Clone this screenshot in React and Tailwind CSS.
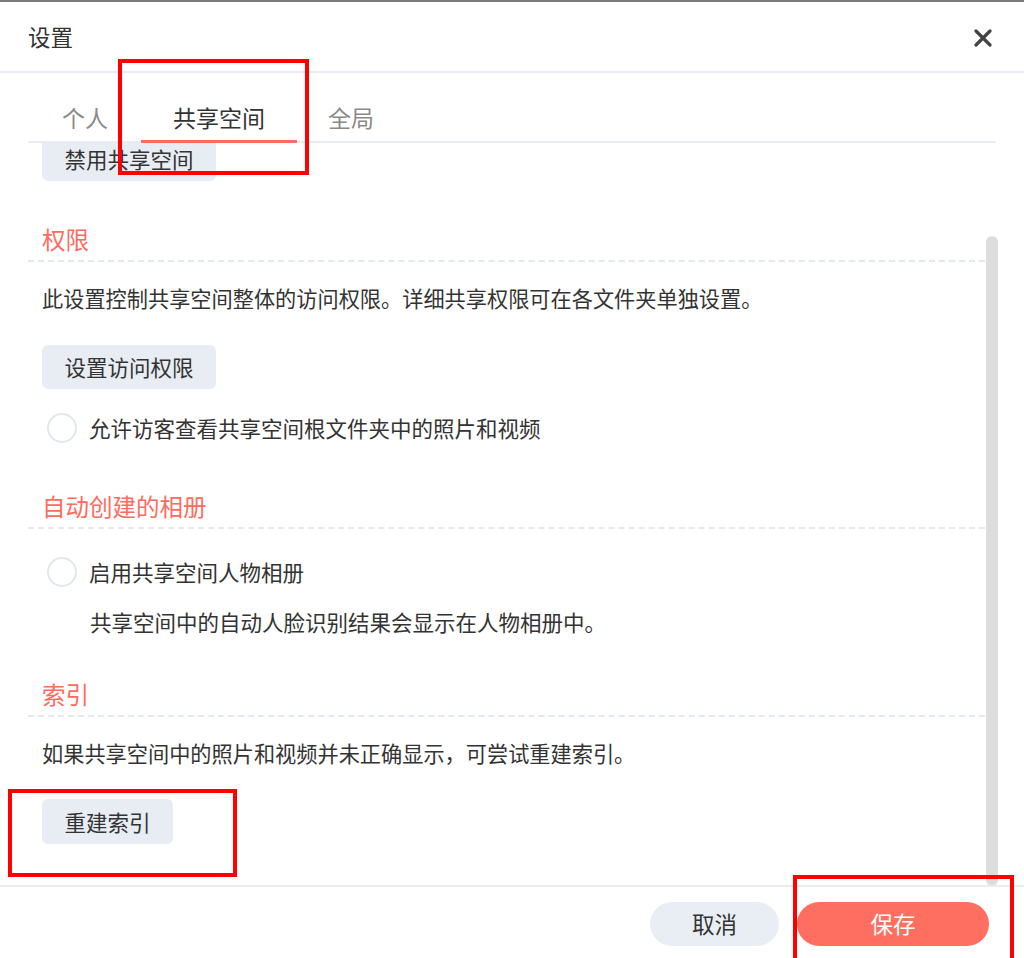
import React from 'react';

const font = { fontFamily: '"Noto Sans CJK SC", "Noto Sans", sans-serif' };

const GrayButton = ({ children, className = '' }) => (
  <button className={`h-[44px] rounded-[6px] bg-[#e8edf3] text-[#333] text-[21.5px] leading-none ${className}`}>
    {children}
  </button>
);

const SectionTitle = ({ children, className = '' }) => (
  <div className={`border-b-2 border-dashed border-[#e3e9f0] pb-[6px] ${className}`}>
    <div className="pl-[14px] h-[30px] leading-[30px] text-[23.5px] text-[#ff6b5e]">{children}</div>
  </div>
);

const Radio = ({ label }) => (
  <div className="flex items-center gap-[12px] pl-[19px] h-[30px]">
    <span className="w-[30px] h-[30px] rounded-full border-2 border-[#e1e7ee] bg-white shrink-0" />
    <span className="text-[21.5px] text-[#333] leading-[30px]">{label}</span>
  </div>
);

export default function App() {
  return (
    <div className="relative w-[1024px] h-[958px] bg-white overflow-hidden border-t-2 border-[#7a7a7a]" style={font}>
      {/* header */}
      <div className="h-[71px] flex items-center justify-between pl-[28px] pr-[32px] border-b-2 border-[#e8edf3]">
        <span className="text-[22.5px] text-[#333]">设置</span>
        <svg width="18" height="18" viewBox="0 0 18 18" className="mt-[2px]">
          <path d="M2 2 L16 16 M16 2 L2 16" stroke="#444" strokeWidth="3.2" strokeLinecap="round" />
        </svg>
      </div>

      {/* tabs */}
      <div className="px-[28px]">
        <div className="h-[70px] flex items-end border-b-2 border-[#e8edf3] pl-[30px]">
          <div className="px-[4px] h-full flex items-center pt-[20px] text-[23px] text-[#8a8a8a]">个人</div>
          <div className="ml-[29px] w-[156px] h-full flex items-center justify-center pt-[20px] text-[23px] text-[#333] border-b-[3px] border-[#ff6b5e] -mb-[2px]">共享空间</div>
          <div className="ml-[31px] h-full flex items-center pt-[20px] text-[23px] text-[#8a8a8a]">全局</div>
        </div>
      </div>

      {/* scrolling body */}
      <div className="h-[742px] flex overflow-hidden">
        <div className="flex-1 pl-[28px] overflow-hidden">
          <div className="-mt-[6px] pl-[14px]">
            <GrayButton className="w-[174px]">禁用共享空间</GrayButton>
          </div>

          <SectionTitle className="mt-[43px]">权限</SectionTitle>
          <div className="pl-[14px] mt-[21px] h-[30px] leading-[30px] text-[21.2px] text-[#333]">此设置控制共享空间整体的访问权限。详细共享权限可在各文件夹单独设置。</div>
          <div className="pl-[14px] mt-[32px]">
            <GrayButton className="w-[174px]">设置访问权限</GrayButton>
          </div>
          <div className="mt-[24px]">
            <Radio label="允许访客查看共享空间根文件夹中的照片和视频" />
          </div>

          <SectionTitle className="mt-[48px]">自动创建的相册</SectionTitle>
          <div className="mt-[28px]">
            <Radio label="启用共享空间人物相册" />
          </div>
          <div className="pl-[62px] mt-[20px] h-[30px] leading-[30px] text-[21.5px] text-[#333]">共享空间中的自动人脸识别结果会显示在人物相册中。</div>

          <SectionTitle className="mt-[42px]">索引</SectionTitle>
          <div className="pl-[14px] mt-[21px] h-[30px] leading-[30px] text-[21.2px] text-[#333]">如果共享空间中的照片和视频并未正确显示，可尝试重建索引。</div>
          <div className="pl-[14px] mt-[31px]">
            <GrayButton className="w-[131px] h-[45px]">重建索引</GrayButton>
          </div>
        </div>
        <div className="w-[39px] pl-[1px] pt-[93px] flex">
          <div className="w-[12px] h-[650px] rounded-full bg-[#dddddd]" />
        </div>
      </div>

      {/* footer */}
      <div className="h-[73px] border-t-2 border-[#e8edf3] flex items-center justify-end gap-[18px] pr-[35px] pt-[3px]">
        <button className="w-[129px] h-[44px] rounded-full bg-[#e9eef4] text-[22.5px] text-[#333]">取消</button>
        <button className="w-[192px] h-[44px] rounded-full bg-[#ff6f61] text-[22.5px] text-white">保存</button>
      </div>

      {/* annotation boxes */}
      <div className="absolute left-[118px] top-[57px] w-[191px] h-[116px] border-4 border-[#ff0000]" />
      <div className="absolute left-[8px] top-[787px] w-[229px] h-[88px] border-4 border-[#ff0000]" />
      <div className="absolute left-[793px] top-[873px] w-[221px] h-[100px] border-4 border-[#ff0000]" />
    </div>
  );
}
